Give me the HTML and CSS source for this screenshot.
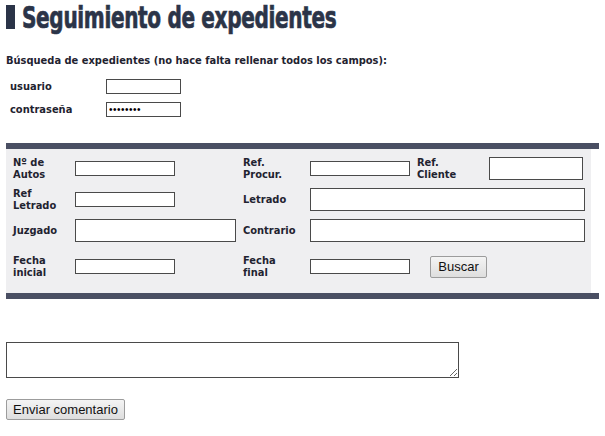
FILE: index.html
```html
<!DOCTYPE html>
<html lang="es">
<head>
<meta charset="utf-8">
<title>Seguimiento de expedientes</title>
<link rel="stylesheet" href="styles.css">
</head>
<body>
<div class="page">
  <h1 class="title"><span class="title-mark"></span><span class="title-text">Seguimiento de expedientes</span></h1>
  <p class="intro">Búsqueda de expedientes (no hace falta rellenar todos los campos):</p>
  <div class="login">
    <label class="lbl">usuario</label>
    <input class="field f-login" type="text" value="">
    <label class="lbl">contraseña</label>
    <input class="field f-login f-pass" type="password" value="********">
  </div>

  <div class="search">
    <div class="bar"></div>
    <div class="panel">
      <div class="grid">
        <label class="lbl">Nº de<br>Autos</label>
        <input class="field f-small" type="text">
        <label class="lbl">Ref.<br>Procur.</label>
        <input class="field f-small" type="text">
        <label class="lbl">Ref.<br>Cliente</label>
        <input class="field f-client" type="text">

        <label class="lbl">Ref<br>Letrado</label>
        <input class="field f-small" type="text">
        <label class="lbl">Letrado</label>
        <input class="field f-wide span3" type="text">

        <label class="lbl">Juzgado</label>
        <input class="field f-mid" type="text">
        <label class="lbl">Contrario</label>
        <input class="field f-wide span3" type="text">

        <label class="lbl">Fecha<br>inicial</label>
        <input class="field f-small" type="text">
        <label class="lbl">Fecha<br>final</label>
        <input class="field f-small" type="text">
        <button class="btn btn-search" type="button">Buscar</button>
      </div>
    </div>
    <div class="bar"></div>
  </div>

  <textarea class="comment"></textarea>
  <button class="btn btn-send" type="button">Enviar comentario</button>
</div>
</body>
</html>
```

FILE: styles.css
```css
html, body {
  margin: 0;
  padding: 0;
  background: #ffffff;
}

.page {
  padding: 5px 6px 0 6px;
  width: 593px;
  display: flex;
  flex-direction: column;
  align-items: flex-start;
}

.title {
  margin: 0;
  height: 25px;
  display: flex;
  align-items: flex-start;
  gap: 7px;
}

.title-mark {
  width: 9px;
  height: 24px;
  background: #2b3448;
  flex: none;
}

.title-text {
  display: inline-block;
  font-family: "DejaVu Sans Condensed", "DejaVu Sans", sans-serif;
  font-weight: bold;
  font-size: 31px;
  line-height: 24px;
  color: #2b3448;
  letter-spacing: -0.5px;
  -webkit-text-stroke: 0.7px #2b3448;
  transform: scaleX(0.72);
  transform-origin: left center;
  white-space: nowrap;
}

.intro {
  margin: 25px 0 0 0;
  font-family: "DejaVu Sans Condensed", "DejaVu Sans", sans-serif;
  font-weight: bold;
  font-size: 11px;
  line-height: 12px;
  color: #1f2330;
}

.lbl {
  font-family: "DejaVu Sans Condensed", "DejaVu Sans", sans-serif;
  font-weight: bold;
  font-size: 11px;
  line-height: 12px;
  color: #1f2330;
}

.login {
  margin-top: 8px;
  padding-left: 4px;
  display: grid;
  grid-template-columns: 96px 75px;
  grid-auto-rows: 23px;
  align-items: center;
}

.field {
  box-sizing: border-box;
  margin: 0;
  padding: 0 2px;
  border: 1px solid #4a4a4a;
  background: #ffffff;
  font-family: "Liberation Sans", sans-serif;
  font-size: 11px;
  outline: none;
}

.f-login {
  width: 75px;
  height: 15px;
}

.f-pass {
  font-size: 10px;
  letter-spacing: 0.5px;
}

.search {
  margin-top: 22px;
  width: 593px;
}

.bar {
  height: 6px;
  background: #4a4f63;
}

.panel {
  width: 585px;
  background: #efeff1;
  padding: 4px 0 6px 7px;
  box-sizing: border-box;
}

.grid {
  display: grid;
  grid-template-columns: 62px 168px 67px 107px 72px 94px;
  grid-template-rows: 31px 31px 31px 41px;
  align-items: center;
}

.f-small {
  width: 100px;
  height: 15px;
}

.f-client {
  width: 94px;
  height: 23px;
}

.f-mid {
  width: 161px;
  height: 23px;
}

.f-wide {
  width: 275px;
  height: 23px;
}

.span3 {
  grid-column: span 3;
}

.btn {
  font-family: "Liberation Sans", Arial, sans-serif;
  font-size: 13px;
  color: #111111;
  background: linear-gradient(#f4f4f4, #dedede);
  border: 1px solid #9c9c9c;
  border-radius: 2px;
  padding: 0 6px;
  height: 21px;
  margin: 0;
}

.btn-search {
  justify-self: start;
  margin-left: 13px;
  width: 57px;
  height: 22px;
}

.comment {
  box-sizing: border-box;
  margin: 43px 0 0 0;
  width: 453px;
  height: 36px;
  border: 1px solid #4a4a4a;
  resize: vertical;
  padding: 2px;
  font-family: "Liberation Sans", sans-serif;
}

.btn-send {
  margin-top: 21px;
  width: 119px;
}
```
